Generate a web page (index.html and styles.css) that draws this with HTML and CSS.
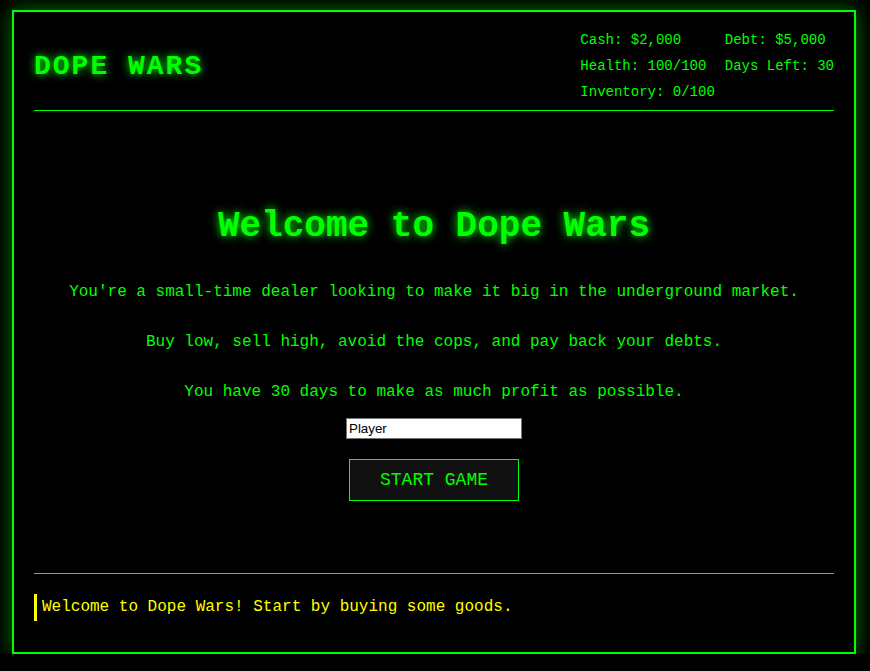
FILE: index.html
```html
<!DOCTYPE html>
<html lang="en">

<head>
    <meta charset="UTF-8">
    <meta name="viewport" content="width=device-width, initial-scale=1.0">
    <title>Dope Wars</title>
    <link rel="stylesheet" href="styles.css">
</head>

<body>
    <div id="game">
        <header>
            <div class="logo">DOPE WARS</div>
            <div class="stats">
                <div>Cash: $2,000</div>
                <div>Debt: $5,000</div>
                <div>Health: 100/100</div>
                <div>Days Left: 30</div>
                <div>Inventory: 0/100</div>
            </div>
        </header>

        <!-- Start screen -->
        <main id="start-screen">
            <h1>Welcome to Dope Wars</h1>
            <div class="intro">
                <p>You're a small-time dealer looking to make it big in the underground market.</p>
                <p>Buy low, sell high, avoid the cops, and pay back your debts.</p>
                <p>You have 30 days to make as much profit as possible.</p>
            </div>
            <input type="text" id="playerName" value="Player">
            <button id="startBtn">Start Game</button>
        </main>

        <footer>
            <div class="message">Welcome to Dope Wars! Start by buying some goods.</div>
        </footer>
    </div>
</body>

</html>
```

FILE: styles.css
```css
body {
    font-family: 'Liberation Mono', 'Courier New', monospace;
    margin: 0;
    padding: 0;
    background-color: #000;
    color: #0f0;
}

#game {
    box-sizing: border-box;
    height: 644px;
    margin: 10px 14px 0 12px;
    padding: 20px;
    border: 2px solid #0f0;
    box-shadow: 0 0 20px rgba(0, 255, 0, 0.45);
    display: flex;
    flex-direction: column;
}

header {
    display: flex;
    justify-content: space-between;
    align-items: center;
    padding-bottom: 10px;
    border-bottom: 1px solid #0f0;
}

.logo {
    font-size: 28px;
    font-weight: bold;
    letter-spacing: 2px;
    text-shadow: 0 0 8px #0f0;
}

.stats {
    display: grid;
    grid-template-columns: auto auto;
    gap: 10px;
    font-size: 14px;
    line-height: 16px;
}

#start-screen {
    flex: 1;
    display: flex;
    flex-direction: column;
    align-items: center;
    justify-content: center;
    padding-top: 22px;
}

h1 {
    margin: 0 0 30px;
    font-size: 36px;
    line-height: 41px;
    text-shadow: 0 0 10px #0f0;
}

.intro {
    display: flex;
    flex-direction: column;
    gap: 20px;
    margin-bottom: 11px;
    text-align: center;
}

.intro p {
    margin: 0;
    font-size: 16px;
    line-height: 30px;
}

input {
    box-sizing: border-box;
    width: 176px;
    height: 21px;
    padding: 1px 2px;
    border: 1px solid #767676;
    font-family: 'Liberation Sans', Arial, sans-serif;
    font-size: 13.33px;
    color: #000;
    background-color: #fff;
}

button {
    margin-top: 20px;
    padding: 10px 30px;
    font-family: 'Liberation Mono', 'Courier New', monospace;
    font-size: 18px;
    line-height: 20px;
    text-transform: uppercase;
    color: #0f0;
    background-color: #111;
    border: 1px solid #0f0;
    cursor: pointer;
}

footer {
    border-top: 1px solid #0f0;
    padding-top: 20px;
}

.message {
    margin-bottom: 11px;
    padding: 5px;
    border-left: 3px solid #ff0;
    color: #ff0;
    font-size: 16px;
    line-height: 17px;
}
```
